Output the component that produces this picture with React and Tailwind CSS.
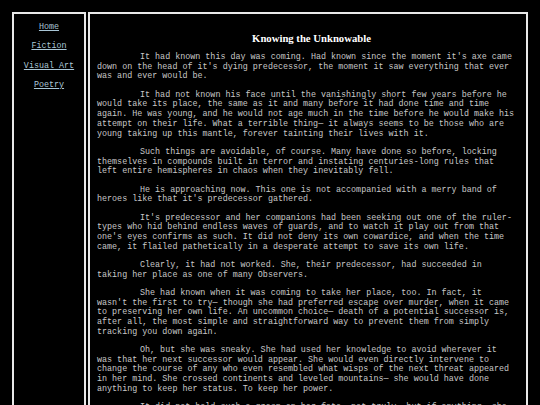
import React from 'react';

const links = ['Home', 'Fiction', 'Visual Art', 'Poetry'];

const paragraphs = [
  "It had known this day was coming. Had known since the moment it's axe came down on the head of it's dying predecessor, the moment it saw everything that ever was and ever would be.",
  "It had not known his face until the vanishingly short few years before he would take its place, the same as it and many before it had done time and time again. He was young, and he would not age much in the time before he would make his attempt on their life. What a terrible thing\u2014 it always seems to be those who are young taking up this mantle, forever tainting their lives with it.",
  "Such things are avoidable, of course. Many have done so before, locking themselves in compounds built in terror and instating centuries-long rules that left entire hemispheres in chaos when they inevitably fell.",
  "He is approaching now. This one is not accompanied with a merry band of heroes like that it's predecessor gathered.",
  "It's predecessor and her companions had been seeking out one of the ruler-types who hid behind endless waves of guards, and to watch it play out from that one's eyes confirms as such. It did not deny its own cowardice, and when the time came, it flailed pathetically in a desperate attempt to save its own life.",
  "Clearly, it had not worked. She, their predecessor, had succeeded in taking her place as one of many Observers.",
  "She had known when it was coming to take her place, too. In fact, it wasn't the first to try\u2014 though she had preferred escape over murder, when it came to preserving her own life. An uncommon choice\u2014 death of a potential successor is, after all, the most simple and straightforward way to prevent them from simply tracking you down again.",
  "Oh, but she was sneaky. She had used her knowledge to avoid wherever it was that her next successor would appear. She would even directly intervene to change the course of any who even resembled what wisps of the next threat appeared in her mind. She crossed continents and leveled mountains\u2014 she would have done anything to keep her status. To keep her power.",
  "It did not hold such a grasp on her fate, not truly, but if anything, she only ever wished that it had been otherwise.",
];

export default function App() {
  return (
    <div className="min-h-screen bg-black p-3 pb-0 flex gap-[2px] font-['Liberation_Mono',monospace] text-[8.4px] leading-[9.7px] text-[#c8c8c8]">
      <nav className="w-[74px] shrink-0 border-2 border-b-0 border-[#e8e8e8] flex flex-col items-center pt-[9px] gap-[9.6px] min-h-[400px]">
        {links.map((l) => (
          <a key={l} href="#" className="text-[#a9c6d6] underline">
            {l}
          </a>
        ))}
      </nav>
      <main className="flex-1 border-2 border-b-0 border-[#e8e8e8] pl-[7px] pt-[18px] h-[405px] overflow-hidden">
        <h1 className="text-center font-['Liberation_Serif',serif] font-bold text-white text-[10.7px] leading-[12px] mb-[9px]">
          Knowing the Unknowable
        </h1>
        <div className="w-[419px]">
          {paragraphs.map((p, i) => (
            <p key={i} className="indent-[43px] mb-[8.6px]">
              {p}
            </p>
          ))}
        </div>
      </main>
    </div>
  );
}
